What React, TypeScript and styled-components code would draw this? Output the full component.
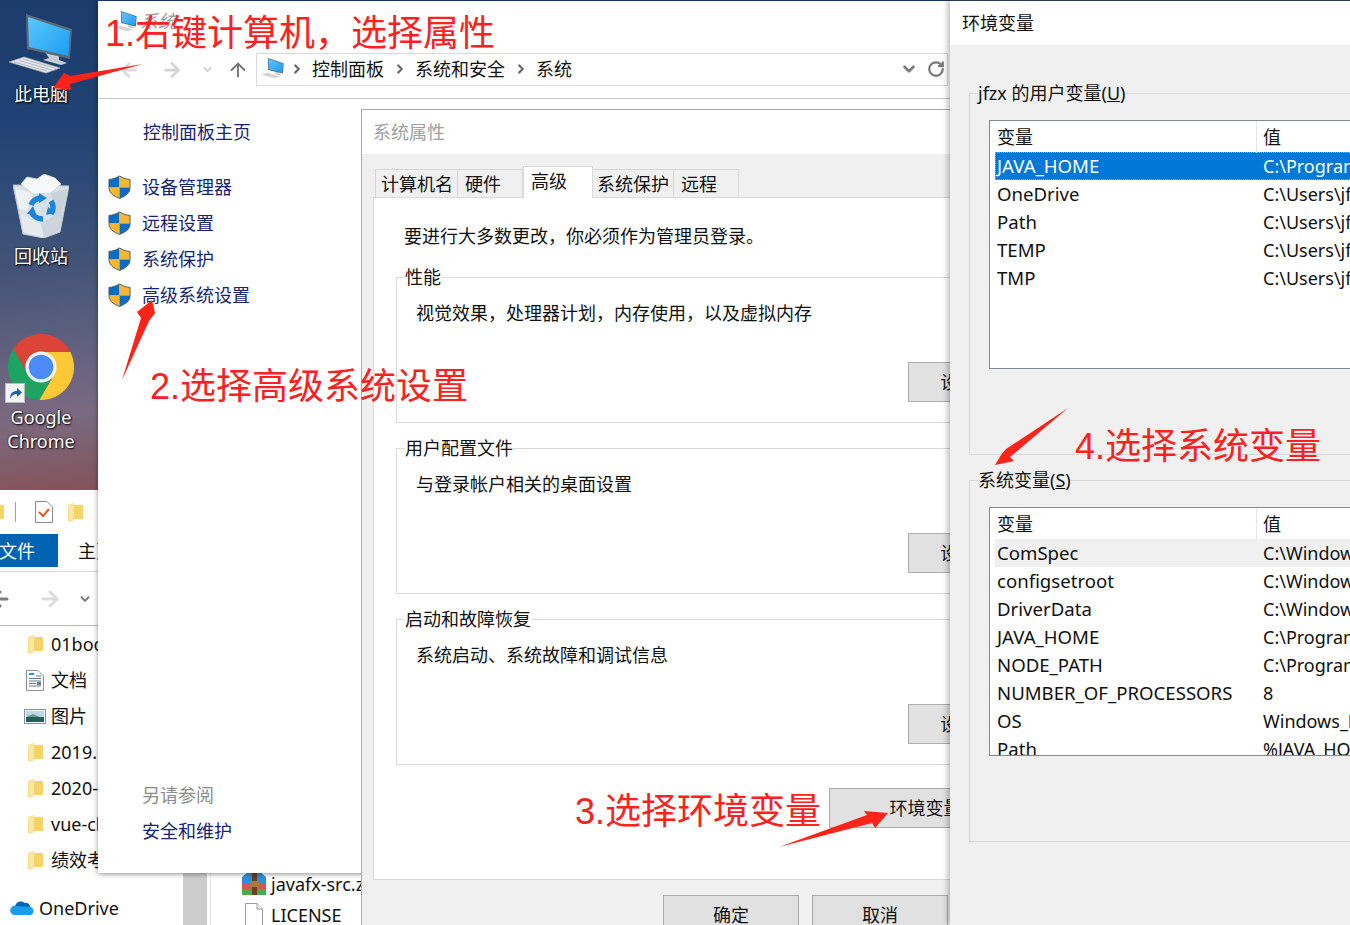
import React, { ReactElement } from 'react';
import styled, { createGlobalStyle } from 'styled-components';
import {
  ArrowLeft,
  ArrowRight,
  ArrowUp,
  ChevronDown,
  ChevronRight,
  RotateCw,
} from 'lucide-react';

const GlobalStyle = createGlobalStyle`
  html, body {
    margin: 0;
    padding: 0;
    background: #fff;
  }
  * {
    box-sizing: border-box;
  }
`;

const Screen = styled.div`
  position: relative;
  width: 1350px;
  height: 925px;
  overflow: hidden;
  font-family: 'Noto Sans', 'Noto Sans CJK SC', sans-serif;
  font-size: 18px;
  line-height: 24px;
  color: #111;
  background:
    linear-gradient(172deg, transparent 24%, rgba(190, 205, 225, 0.22) 38%, transparent 50%),
    linear-gradient(180deg, #1b3c6c 0, #1f4274 120px, #3c5278 240px, #4c5374 320px, #634f6a 400px, #7f474c 490px);
`;

/* desktop icons */

const DesktopColumn = styled.div`
  width: 82px;
  padding-top: 14px;
  display: flex;
  flex-direction: column;
  align-items: center;
`;

const DesktopItem = styled.div<{ $gap: number }>`
  display: flex;
  flex-direction: column;
  align-items: center;
  margin-bottom: ${({ $gap }) => $gap}px;
`;

const DesktopLabel = styled.div<{ $gap: number }>`
  margin-top: ${({ $gap }) => $gap}px;
  color: #fff;
  text-align: center;
  text-shadow: 1px 1px 2px #000, 0 0 2px rgba(0, 0, 0, 0.7);
  white-space: nowrap;
`;

const ComputerIcon = ({ width }: { width: number }): ReactElement => (
  <svg width={width} height={(width * 60) / 64} viewBox="0 0 64 60">
    <defs>
      <linearGradient id="screenBlue" x1="0" y1="0" x2="1" y2="1">
        <stop offset="0" stopColor="#5cc8ff" />
        <stop offset="1" stopColor="#1d9cf0" />
      </linearGradient>
    </defs>
    <polygon points="36,38 50,41 50,46 58,49 52,51 34,46 40,44" fill="#c5cdd4" />
    <polygon points="17,0 63,15 61,45 18,35" fill="#5b6a78" />
    <polygon points="19,3 61,17 59.5,42 20,33" fill="url(#screenBlue)" />
    <polygon points="0,48 15,43 51,54 37,59" fill="#e4e7ea" stroke="#aab1b8" strokeWidth="0.6" />
    <path d="M5 48 L38 57 M10 46.5 L43 56 M14 45 L47 54.5" stroke="#a4abb3" strokeWidth="0.8" />
  </svg>
);

const RecycleIcon = (): ReactElement => (
  <svg width="56" height="64" viewBox="0 0 56 64">
    <polygon points="0,11 56,12 47,58 31,64 10,60" fill="#d9e0e6" stroke="#bfc7ce" strokeWidth="1" />
    <polygon points="8,10 14,3 24,5 31,0 42,4 48,10 38,19 20,20" fill="#f7f8fa" stroke="#d0d5da" strokeWidth="0.8" />
    <polygon points="2,14 20,20 14,38 6,34" fill="#eef1f4" />
    <polygon points="54,15 38,19 42,42 50,36" fill="#c9d1d9" />
    <polygon points="10,58 8,40 28,50 31,64" fill="#e6eaee" />
    <polygon points="47,56 50,36 28,50 31,64" fill="#cdd4db" />
    <path d="M18 31 A12 12 0 0 1 27 24" stroke="#1a84dc" strokeWidth="5.5" fill="none" />
    <polygon points="26,19 34,24 26,29" fill="#1a84dc" />
    <path d="M38 27 A12 12 0 0 1 38 40" stroke="#1a84dc" strokeWidth="5.5" fill="none" />
    <polygon points="43,38 33,41 35,33" fill="#1a84dc" />
    <path d="M30 45 A12 12 0 0 1 18 37" stroke="#1a84dc" strokeWidth="5.5" fill="none" />
    <polygon points="14,40 20,32 23,40" fill="#1a84dc" />
  </svg>
);

const ChromeWrap = styled.div`
  position: relative;
  width: 66px;
  height: 69px;
`;

const ShortcutBadge = styled.div`
  position: absolute;
  left: -3px;
  bottom: 0;
  width: 20px;
  height: 20px;
  background: #f2f4f6;
  border: 1px solid #b8bcc0;
  display: flex;
  align-items: center;
  justify-content: center;
`;

const ChromeIcon = (): ReactElement => (
  <ChromeWrap>
    <svg width="66" height="66" viewBox="2 2 44 44">
      <path d="M5.54 12 A22 22 0 0 1 43.6 14 L24 14 A10 10 0 0 0 15.34 29 Z" fill="#db4437" />
      <path d="M43.6 14 A22 22 0 0 1 22.86 46 L32.66 29 A10 10 0 0 0 24 14 Z" fill="#fcc934" />
      <path d="M22.86 46 A22 22 0 0 1 5.54 12 L15.34 29 A10 10 0 0 0 32.66 29 Z" fill="#1ea362" />
      <circle cx="24" cy="24" r="10.4" fill="#f1f3f4" />
      <circle cx="24" cy="24" r="8.2" fill="#4c8bf5" />
    </svg>
    <ShortcutBadge>
      <svg width="16" height="16" viewBox="0 0 16 16">
        <path d="M3 14 C3 8 6 6 10 6 V3 L15 7.5 L10 12 V9 C7 9 5 10 3 14Z" fill="#1f5fa8" />
      </svg>
    </ShortcutBadge>
  </ChromeWrap>
);

/* small explorer glyphs */

const FolderIcon = (): ReactElement => (
  <svg width="15" height="19" viewBox="0 0 15 19">
    <polygon points="0,2 6,0 6,2 15,2 15,16 6,16 6,17 1,19 0,17" fill="#f6d365" />
    <polygon points="0,2 6,0 6,16 1,19" fill="#fbe7a1" />
  </svg>
);

const DocIcon = (): ReactElement => (
  <svg width="18" height="21" viewBox="0 0 18 21">
    <path d="M0.5 0.5 H12 L17.5 6 V20.5 H0.5 Z" fill="#fff" stroke="#8a8f96" />
    <path d="M3 4 H8" stroke="#2f8fe0" strokeWidth="2" />
    <path d="M10 6 H15 M3 8.5 H15 M3 11 H15 M3 13.5 H10 M3 16 H15" stroke="#5c7a98" />
    <rect x="11" y="12" width="4" height="3" fill="#6a7a88" />
  </svg>
);

const PictureIcon = (): ReactElement => (
  <svg width="22" height="15" viewBox="0 0 22 15">
    <rect x="0.5" y="0.5" width="21" height="14" fill="#fff" stroke="#8a8f96" />
    <rect x="2" y="2" width="18" height="6" fill="#bcd8e4" />
    <rect x="2" y="8" width="18" height="5" fill="#1f5f5a" />
    <polygon points="2,8 9,5 16,8" fill="#6f9a80" />
  </svg>
);

const OneDriveIcon = (): ReactElement => (
  <svg width="24" height="16" viewBox="0 0 24 16">
    <path d="M5 6 C6 2 11 0 14.5 3 C17 2 20 4 20 7 L10 12 Z" fill="#0364b8" />
    <path d="M5 15 C1 15 -1 11 1 8 C2 6 4 5.5 6 6 L20 7 C23 7 24.5 11 23 13 C22.5 14.5 21 15 20 15 Z" fill="#1c9be8" />
  </svg>
);

const BlankFileIcon = (): ReactElement => (
  <svg width="18" height="24" viewBox="0 0 18 24">
    <path d="M0.5 0.5 H12 L17.5 6 V23.5 H0.5 Z" fill="#fff" stroke="#9b9b9b" />
    <path d="M12 0.5 V6 H17.5" fill="#eee" stroke="#9b9b9b" />
  </svg>
);

const RarIcon = (): ReactElement => (
  <svg width="24" height="24" viewBox="0 0 24 24">
    <polygon points="0,5 6,0 18,0 24,5 24,12 0,12" fill="#2f8ed8" />
    <rect x="0" y="11" width="24" height="6" fill="#d9534f" />
    <rect x="0" y="17" width="24" height="6" fill="#4aa84a" />
    <rect x="10" y="0" width="5" height="23" fill="#6d3f1e" />
    <rect x="8" y="9" width="9" height="6" fill="#a97a4a" />
  </svg>
);

const NoteIcon = (): ReactElement => (
  <svg width="18" height="22" viewBox="0 0 18 22">
    <path d="M0.5 0.5 H12 L17.5 6 V21.5 H0.5 Z" fill="#fff" stroke="#8a8a8a" />
    <path d="M4 11 L8 15 L14 8" fill="none" stroke="#e8581c" strokeWidth="2" />
  </svg>
);

const ShieldIcon = (): ReactElement => (
  <svg width="23" height="24" viewBox="0 0 24 25">
    <clipPath id="shieldClip">
      <path d="M12 1 C8 3.5 4 4.5 1 4.5 V13 C1 19 6 22 12 24.5 C18 22 23 19 23 13 V4.5 C20 4.5 16 3.5 12 1Z" />
    </clipPath>
    <g clipPath="url(#shieldClip)">
      <rect x="0" y="0" width="12" height="13" fill="#0a6cc4" />
      <rect x="12" y="0" width="12" height="13" fill="#f7b731" />
      <rect x="0" y="13" width="12" height="12" fill="#f7b731" />
      <rect x="12" y="13" width="12" height="12" fill="#0a6cc4" />
    </g>
    <path
      d="M12 1 C8 3.5 4 4.5 1 4.5 V13 C1 19 6 22 12 24.5 C18 22 23 19 23 13 V4.5 C20 4.5 16 3.5 12 1Z"
      fill="none"
      stroke="#4b5a66"
      strokeWidth="1"
    />
  </svg>
);

/* explorer behind everything */

const ExplorerWindow = styled.div`
  position: absolute;
  left: -20px;
  top: 490px;
  width: 382px;
  height: 435px;
  background: #fff;
  display: flex;
  flex-direction: column;
`;

const QuickBar = styled.div`
  height: 44px;
  padding-left: 9px;
  display: flex;
  align-items: center;
`;

const QuickDivider = styled.div`
  width: 1px;
  height: 20px;
  background: #a0a0a0;
  margin: 0 19px 0 11px;
`;

const QuickNote = styled.div`
  margin-right: 15px;
  display: flex;
`;

const RibbonTabs = styled.div`
  height: 38px;
  padding-bottom: 4px;
  display: flex;
  border-bottom: 1px solid #d9d9d9;
`;

const FileTab = styled.div`
  width: 78px;
  padding-left: 19px;
  background: #0063b1;
  color: #fff;
  line-height: 34px;
`;

const RibbonTab = styled.div`
  margin-left: 20px;
  line-height: 34px;
`;

const ExplorerNav = styled.div`
  height: 54px;
  padding-left: 8px;
  display: flex;
  align-items: center;
  border-bottom: 1px solid #b8b8b8;
`;

const NavSlot = styled.div<{ $width: number; $color: string }>`
  width: ${({ $width }) => $width}px;
  display: flex;
  align-items: center;
  color: ${({ $color }) => $color};
`;

const ExplorerBody = styled.div`
  flex: 1;
  display: flex;
  min-height: 0;
`;

const Tree = styled.div`
  width: 203px;
  flex-shrink: 0;
  display: flex;
  flex-direction: column;
`;

const TreeRow = styled.div<{ $indent: number; $top?: number }>`
  height: 36px;
  flex-shrink: 0;
  padding-left: ${({ $indent }) => $indent}px;
  margin-top: ${({ $top }) => $top || 0}px;
  display: flex;
  align-items: center;
  gap: 5px;
  white-space: nowrap;
`;

const TreeIconSlot = styled.div<{ $width: number }>`
  width: ${({ $width }) => $width}px;
  flex-shrink: 0;
  display: flex;
  justify-content: center;
`;

const Splitter = styled.div`
  width: 24px;
  flex-shrink: 0;
  background: #cdcdcd;
`;

const FileList = styled.div`
  flex: 1;
  margin-left: 3px;
  padding: 242px 0 0 31px;
  border-left: 1px solid #e6e6e6;
  display: flex;
  flex-direction: column;
`;

const FileRow = styled.div`
  height: 31px;
  flex-shrink: 0;
  display: flex;
  align-items: center;
  gap: 5px;
  white-space: nowrap;
`;

const FileIconSlot = styled.div`
  width: 24px;
  display: flex;
  justify-content: center;
`;

/* control panel */

const ControlWindow = styled.div`
  position: absolute;
  left: 98px;
  top: 1px;
  width: 860px;
  height: 872px;
  background: #fff;
  box-shadow: 0 1px 5px rgba(0, 0, 0, 0.45);
  display: flex;
  flex-direction: column;
`;

const ControlTitle = styled.div`
  height: 52px;
  padding: 0 0 12px 17px;
  display: flex;
  align-items: center;
  gap: 3px;
  color: #9a9a9a;
  font-style: italic;
`;

const ControlNav = styled.div`
  height: 33px;
  padding-left: 20px;
  display: flex;
  align-items: center;
`;

const AddressBar = styled.div`
  width: 692px;
  height: 33px;
  border: 1px solid #d9d9d9;
  padding: 0 2px 2px 5px;
  display: flex;
  align-items: center;
  gap: 8px;
`;

const AddressIcon = styled.div`
  display: flex;
  margin-right: -2px;
`;

const AddressCrumb = styled.span`
  margin-right: 1px;
`;

const AddressTools = styled.div`
  margin-left: auto;
  display: flex;
  align-items: center;
  gap: 9px;
  color: #7a7a7a;
`;

const ControlRule = styled.div`
  height: 1px;
  margin-top: 12px;
  background: #c8c8c8;
`;

const Sidebar = styled.div`
  flex: 1;
  padding: 21px 0 30px 10px;
  display: flex;
  flex-direction: column;
  color: #16256e;
`;

const SidebarHome = styled.div`
  padding-left: 35px;
  margin-bottom: 25px;
`;

const ShieldRow = styled.div`
  height: 36px;
  display: flex;
  align-items: center;
  gap: 11px;
`;

const SeeAlso = styled.div`
  margin-top: auto;
  padding-left: 34px;
  color: #8c8c8c;
`;

const SeeAlsoLink = styled.div`
  margin-top: 12px;
  padding-left: 34px;
`;

/* system properties dialog */

const SystemDialog = styled.div`
  position: absolute;
  left: 361px;
  top: 109px;
  width: 750px;
  height: 816px;
  border: 1px solid #a8a8a8;
  border-bottom: 0;
  background: #f0f0f0;
  overflow: hidden;
  display: flex;
  flex-direction: column;
`;

const DialogTitle = styled.div<{ $color: string; $pad: number }>`
  height: 44px;
  flex-shrink: 0;
  padding: 0 0 1px ${({ $pad }) => $pad}px;
  background: #fff;
  color: ${({ $color }) => $color};
  display: flex;
  align-items: center;
`;

const DialogBody = styled.div`
  padding: 12px 12px 0 11px;
  display: flex;
  flex-direction: column;
`;

const TabStrip = styled.div`
  display: flex;
  align-items: flex-end;
  height: 32px;
  margin-left: 2px;
  margin-bottom: -1px;
  position: relative;
  z-index: 1;
`;

const Tab = styled.div<{ $width: number; $pad: number; $active?: boolean }>`
  width: ${({ $width }) => $width}px;
  height: ${({ $active }) => ($active ? 32 : 29)}px;
  padding: 2px 0 0 ${({ $pad }) => $pad}px;
  background: ${({ $active }) => ($active ? '#fff' : '#f0f0f0')};
  border: 1px solid #d9d9d9;
  border-left-width: ${({ $active }) => ($active ? 1 : 0)}px;
  border-bottom: ${({ $active }) => ($active ? '0' : '1px solid #d9d9d9')};
  white-space: nowrap;
  &:first-child {
    border-left-width: 1px;
  }
`;

const TabPanel = styled.div`
  height: 683px;
  background: #fff;
  border: 1px solid #d9d9d9;
  padding: 26px 28px 0 22px;
  display: flex;
  flex-direction: column;
`;

const PanelIntro = styled.div`
  padding-left: 8px;
  margin-bottom: 17px;
`;

const GroupBox = styled.fieldset<{ $top?: number }>`
  margin: ${({ $top }) => $top || 0}px 0 0;
  height: 158px;
  padding: 12px 24px 20px 19px;
  border: 1px solid #d9d9d9;
  min-width: 0;
`;

const GroupLegend = styled.legend`
  margin-left: -11px;
  padding: 0;
  height: 24px;
`;

const GroupText = styled.div`
  margin-bottom: 37px;
`;

const WinButton = styled.div<{ $width: number }>`
  width: ${({ $width }) => $width}px;
  height: 40px;
  flex-shrink: 0;
  background: #e1e1e1;
  border: 1px solid #adadad;
  display: flex;
  align-items: center;
  justify-content: center;
  white-space: nowrap;
`;

const EnvButton = styled(WinButton)`
  padding-right: 8px;
`;

const GroupActions = styled.div`
  display: flex;
  justify-content: flex-end;
`;

const PanelActions = styled.div`
  margin-top: 23px;
  display: flex;
  justify-content: flex-end;
`;

const DialogFooter = styled.div`
  margin: 15px 0 0 290px;
  display: flex;
  gap: 13px;
`;

/* environment variables */

const EnvWindow = styled.div`
  position: absolute;
  left: 950px;
  top: 0;
  width: 500px;
  height: 925px;
  background: #f0f0f0;
  border-top: 1px solid #2a3a50;
  box-shadow: -2px 0 6px rgba(0, 0, 0, 0.3);
  display: flex;
  flex-direction: column;
`;

const EnvBody = styled.div`
  padding: 36px 0 0 19px;
  display: flex;
  flex-direction: column;
`;

const EnvGroup = styled.fieldset<{ $top?: number }>`
  margin: ${({ $top }) => $top || 0}px 0 0;
  padding: 15px 0 85px 19px;
  border: 1px solid #d9d9d9;
  min-width: 0;
`;

const EnvLegend = styled.legend`
  margin-left: -11px;
  padding: 0;
  height: 24px;
  white-space: nowrap;
`;

const VarList = styled.div`
  width: 600px;
  height: 249px;
  background: #fff;
  border: 1px solid #828790;
  overflow: hidden;
`;

const VarHeader = styled.div`
  height: 31px;
  display: grid;
  grid-template-columns: 266px 1fr;
  align-items: center;
`;

const VarHeaderCell = styled.div`
  height: 100%;
  padding: 1px 0 0 7px;
  line-height: 31px;
  & + & {
    border-left: 1px solid #e5e5e5;
    padding-left: 6px;
  }
`;

const VarRow = styled.div<{ $state?: 'selected' | 'hover' }>`
  height: 28px;
  margin-left: 5px;
  display: grid;
  grid-template-columns: 261px 1fr;
  align-items: center;
  white-space: nowrap;
  color: ${({ $state }) => ($state === 'selected' ? '#fff' : 'inherit')};
  background: ${({ $state }) =>
    $state === 'selected' ? '#0078d7' : $state === 'hover' ? '#f0f0f0' : 'transparent'};
  outline: ${({ $state }) => ($state === 'selected' ? '1px dotted #f0a040' : 'none')};
  outline-offset: -1px;
`;

const VarName = styled.div`
  padding-left: 2px;
  font-size: 18.6px;
`;

const VarValue = styled.div`
  padding-left: 7px;
`;

/* red notes drawn on the screenshot */

const Annotation = styled.div<{ $x: number; $y: number }>`
  position: absolute;
  left: ${({ $x }) => $x}px;
  top: ${({ $y }) => $y}px;
  color: #ff2020;
  font-family: 'Liberation Sans', 'Noto Sans CJK SC', sans-serif;
  font-size: 36px;
  line-height: 44px;
  white-space: nowrap;
`;

const ArrowLayer = styled.svg`
  position: absolute;
  left: 0;
  top: 0;
  pointer-events: none;
`;

const userVars: [string, string][] = [
  ['JAVA_HOME', 'C:\\Program Files\\Java\\jdk1.8.0_201'],
  ['OneDrive', 'C:\\Users\\jfzx\\OneDrive'],
  ['Path', 'C:\\Users\\jfzx\\AppData\\Local\\Microsoft'],
  ['TEMP', 'C:\\Users\\jfzx\\AppData\\Local\\Temp'],
  ['TMP', 'C:\\Users\\jfzx\\AppData\\Local\\Temp'],
];

const systemVars: [string, string][] = [
  ['ComSpec', 'C:\\Windows\\system32\\cmd.exe'],
  ['configsetroot', 'C:\\Windows\\ConfigSetRoot'],
  ['DriverData', 'C:\\Windows\\System32\\Drivers\\DriverData'],
  ['JAVA_HOME', 'C:\\Program Files\\Java\\jdk1.8.0_201'],
  ['NODE_PATH', 'C:\\Program Files\\nodejs\\node_global'],
  ['NUMBER_OF_PROCESSORS', '8'],
  ['OS', 'Windows_NT'],
  ['Path', '%JAVA_HOME%\\bin;%SystemRoot%'],
];

const treeItems: { name: string; icon: ReactElement }[] = [
  { name: '01book', icon: <FolderIcon /> },
  { name: '文档', icon: <DocIcon /> },
  { name: '图片', icon: <PictureIcon /> },
  { name: '2019.12', icon: <FolderIcon /> },
  { name: '2020-01', icon: <FolderIcon /> },
  { name: 'vue-cli', icon: <FolderIcon /> },
  { name: '绩效考核', icon: <FolderIcon /> },
];

const shieldLinks = ['设备管理器', '远程设置', '系统保护', '高级系统设置'];

const groups = [
  { title: '性能', text: '视觉效果，处理器计划，内存使用，以及虚拟内存', button: '设置(S)...' },
  { title: '用户配置文件', text: '与登录帐户相关的桌面设置', button: '设置(E)...' },
  { title: '启动和故障恢复', text: '系统启动、系统故障和调试信息', button: '设置(T)...' },
];

const tabs = [
  { label: '计算机名', width: 83, pad: 5 },
  { label: '硬件', width: 65, pad: 7 },
  { label: '高级', width: 70, pad: 7, active: true },
  { label: '系统保护', width: 81, pad: 4 },
  { label: '远程', width: 65, pad: 7 },
];

function VariableList({ rows, firstState }: { rows: [string, string][]; firstState: 'selected' | 'hover' }): ReactElement {
  return (
    <VarList>
      <VarHeader>
        <VarHeaderCell>变量</VarHeaderCell>
        <VarHeaderCell>值</VarHeaderCell>
      </VarHeader>
      {rows.map(([name, value], index) => (
        <VarRow key={name} $state={index === 0 ? firstState : undefined}>
          <VarName>{name}</VarName>
          <VarValue>{value}</VarValue>
        </VarRow>
      ))}
    </VarList>
  );
}

export default function App(): ReactElement {
  return (
    <Screen>
      <GlobalStyle />

      <DesktopColumn>
        <DesktopItem $gap={68}>
          <ComputerIcon width={64} />
          <DesktopLabel $gap={8}>此电脑</DesktopLabel>
        </DesktopItem>
        <DesktopItem $gap={66}>
          <RecycleIcon />
          <DesktopLabel $gap={6}>回收站</DesktopLabel>
        </DesktopItem>
        <DesktopItem $gap={0}>
          <ChromeIcon />
          <DesktopLabel $gap={2}>
            Google
            <br />
            Chrome
          </DesktopLabel>
        </DesktopItem>
      </DesktopColumn>

      <ExplorerWindow>
        <QuickBar>
          <FolderIcon />
          <QuickDivider />
          <QuickNote>
            <NoteIcon />
          </QuickNote>
          <FolderIcon />
        </QuickBar>
        <RibbonTabs>
          <FileTab>文件</FileTab>
          <RibbonTab>主页</RibbonTab>
        </RibbonTabs>
        <ExplorerNav>
          <NavSlot $width={50} $color="#7d7d7d">
            <ArrowLeft size={24} strokeWidth={3} />
          </NavSlot>
          <NavSlot $width={40} $color="#dcdcdc">
            <ArrowRight size={24} strokeWidth={3} />
          </NavSlot>
          <NavSlot $width={20} $color="#7d7d7d">
            <ChevronDown size={14} strokeWidth={3.5} />
          </NavSlot>
        </ExplorerNav>
        <ExplorerBody>
          <Tree>
            {treeItems.map((item) => (
              <TreeRow key={item.name} $indent={44}>
                <TreeIconSlot $width={22}>{item.icon}</TreeIconSlot>
                {item.name}
              </TreeRow>
            ))}
            <TreeRow $indent={30} $top={12}>
              <TreeIconSlot $width={24}>
                <OneDriveIcon />
              </TreeIconSlot>
              OneDrive
            </TreeRow>
          </Tree>
          <Splitter />
          <FileList>
            <FileRow>
              <FileIconSlot>
                <RarIcon />
              </FileIconSlot>
              javafx-src.zip
            </FileRow>
            <FileRow>
              <FileIconSlot>
                <BlankFileIcon />
              </FileIconSlot>
              LICENSE
            </FileRow>
          </FileList>
        </ExplorerBody>
      </ExplorerWindow>

      <ControlWindow>
        <ControlTitle>
          <ComputerIcon width={22} />
          系统
        </ControlTitle>
        <ControlNav>
          <NavSlot $width={43} $color="#dcdcdc">
            <ArrowLeft size={22} strokeWidth={3} />
          </NavSlot>
          <NavSlot $width={40} $color="#d4d4d4">
            <ArrowRight size={22} strokeWidth={3} />
          </NavSlot>
          <NavSlot $width={26} $color="#d0d0d0">
            <ChevronDown size={13} strokeWidth={3.5} />
          </NavSlot>
          <NavSlot $width={29} $color="#707070">
            <ArrowUp size={22} />
          </NavSlot>
          <AddressBar>
            <AddressIcon>
              <ComputerIcon width={22} />
            </AddressIcon>
            <ChevronRight size={14} strokeWidth={4} color="#6a6a6a" />
            <AddressCrumb>控制面板</AddressCrumb>
            <ChevronRight size={14} strokeWidth={4} color="#6a6a6a" />
            <AddressCrumb>系统和安全</AddressCrumb>
            <ChevronRight size={14} strokeWidth={4} color="#6a6a6a" />
            <span>系统</span>
            <AddressTools>
              <ChevronDown size={18} strokeWidth={3.5} />
              <RotateCw size={18} strokeWidth={3} />
            </AddressTools>
          </AddressBar>
        </ControlNav>
        <ControlRule />
        <Sidebar>
          <SidebarHome>控制面板主页</SidebarHome>
          {shieldLinks.map((link) => (
            <ShieldRow key={link}>
              <ShieldIcon />
              {link}
            </ShieldRow>
          ))}
          <SeeAlso>另请参阅</SeeAlso>
          <SeeAlsoLink>安全和维护</SeeAlsoLink>
        </Sidebar>
      </ControlWindow>

      <SystemDialog>
        <DialogTitle $color="#a0a0a0" $pad={11}>
          系统属性
        </DialogTitle>
        <DialogBody>
          <TabStrip>
            {tabs.map((tab) => (
              <Tab key={tab.label} $width={tab.width} $pad={tab.pad} $active={tab.active}>
                {tab.label}
              </Tab>
            ))}
          </TabStrip>
          <TabPanel>
            <PanelIntro>要进行大多数更改，你必须作为管理员登录。</PanelIntro>
            {groups.map((group, index) => (
              <GroupBox key={group.title} $top={index === 0 ? 0 : 13}>
                <GroupLegend>{group.title}</GroupLegend>
                <GroupText>{group.text}</GroupText>
                <GroupActions>
                  <WinButton $width={136}>{group.button}</WinButton>
                </GroupActions>
              </GroupBox>
            ))}
            <PanelActions>
              <EnvButton $width={240}>环境变量(N)...</EnvButton>
            </PanelActions>
          </TabPanel>
          <DialogFooter>
            <WinButton $width={136}>确定</WinButton>
            <WinButton $width={136}>取消</WinButton>
            <WinButton $width={136}>应用(A)</WinButton>
          </DialogFooter>
        </DialogBody>
      </SystemDialog>

      <EnvWindow>
        <DialogTitle $color="#111" $pad={12}>
          环境变量
        </DialogTitle>
        <EnvBody>
          <EnvGroup>
            <EnvLegend>
              jfzx 的用户变量(<u>U</u>)
            </EnvLegend>
            <VariableList rows={userVars} firstState="selected" />
          </EnvGroup>
          <EnvGroup $top={13}>
            <EnvLegend>
              系统变量(<u>S</u>)
            </EnvLegend>
            <VariableList rows={systemVars} firstState="hover" />
          </EnvGroup>
        </EnvBody>
      </EnvWindow>

      <ArrowLayer width="1350" height="925" viewBox="0 0 1350 925">
        <g fill="#ff2319">
          <polygon points="143,64 70,76 64,73 53,88 71,90 70,84" />
          <polygon points="122,380 141,318 137,312 152,300 155,313 149,321" />
          <polygon points="779,847 867,815 864,811 888,813 875,828 872,823" />
          <polygon points="1068,408 1006,449 1001,455 995,465 1014,461 1010,457" />
        </g>
      </ArrowLayer>
      <Annotation $x={105} $y={12}>1.右键计算机，选择属性</Annotation>
      <Annotation $x={150} $y={365}>2.选择高级系统设置</Annotation>
      <Annotation $x={575} $y={790}>3.选择环境变量</Annotation>
      <Annotation $x={1075} $y={425}>4.选择系统变量</Annotation>
    </Screen>
  );
}
